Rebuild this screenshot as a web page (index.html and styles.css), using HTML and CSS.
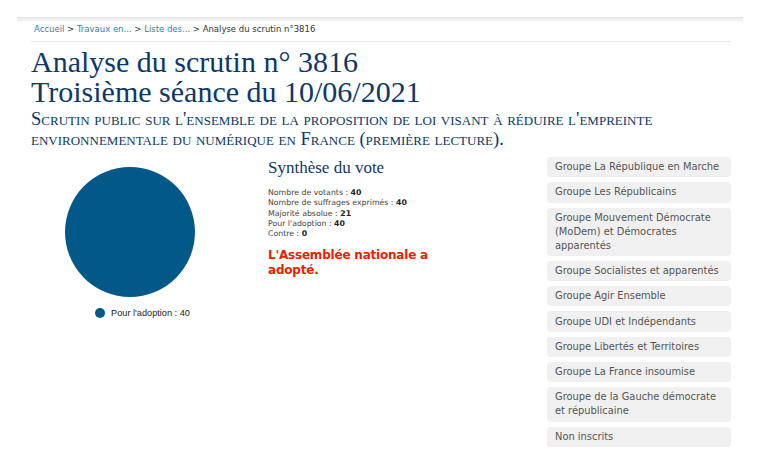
FILE: index.html
```html
<!DOCTYPE html>
<html lang="fr">
<head>
  <meta charset="UTF-8" />
  <title>Analyse du scrutin n° 3816</title>
  <link rel="stylesheet" href="styles.css">
</head>
<body>
  <div class="topbar"></div>
  <div class="page">
    <div class="breadcrumb">
      <a href="#">Accueil</a> &gt; <a href="#">Travaux en...</a> &gt; <a href="#">Liste des...</a> &gt; Analyse du scrutin n°3816
    </div>

    <h1>Analyse du scrutin n° 3816<br>Troisième séance du 10/06/2021</h1>
    <p class="subtitle">Scrutin public sur l'ensemble de la proposition de loi visant à réduire l'empreinte environnementale du numérique en France (première lecture).</p>

    <div class="row">
      <!-- camembert -->
      <div class="chart">
        <svg width="130" height="130" viewBox="0 0 130 130">
          <circle cx="65" cy="65" r="65" fill="#03588a" />
        </svg>
        <div class="legend"><span class="dot"></span>Pour l'adoption : 40</div>
      </div>

      <div class="summary">
        <h2>Synthèse du vote</h2>
        <ul class="stats">
          <li>Nombre de votants : <b>40</b></li>
          <li>Nombre de suffrages exprimés : <b>40</b></li>
          <li>Majorité absolue : <b>21</b></li>
          <li>Pour l'adoption : <b>40</b></li>
          <li>Contre : <b>0</b></li>
        </ul>
        <p class="result">L'Assemblée nationale a adopté.</p>
      </div>

      <ul class="groups">
        <li>Groupe La République en Marche</li>
        <li>Groupe Les Républicains</li>
        <li>Groupe Mouvement Démocrate (MoDem) et Démocrates apparentés</li>
        <li>Groupe Socialistes et apparentés</li>
        <li>Groupe Agir Ensemble</li>
        <li>Groupe UDI et Indépendants</li>
        <li>Groupe Libertés et Territoires</li>
        <li>Groupe La France insoumise</li>
        <li>Groupe de la Gauche démocrate et républicaine</li>
        <li>Non inscrits</li>
      </ul>
    </div>
  </div>
</body>
</html>
```

FILE: styles.css
```css
body {
  margin: 0;
  background: #fff;
  font-family: "DejaVu Sans", Verdana, sans-serif;
  color: #333;
}
.topbar {
  margin: 17px 16px 0 17px;
  height: 6px;
  background: linear-gradient(#e3e3e3, #fff);
}
.page {
  margin: 0 28px 0 31px;
}
.breadcrumb {
  font-size: 8.5px;
  line-height: 12px;
  padding: 0 0 6px 3px;
  color: #333;
  border-bottom: 1px solid #e8e8e8;
}
.breadcrumb a {
  color: #1a87c6;
  text-decoration: none;
}
h1 {
  font-family: "Liberation Serif", "Times New Roman", serif;
  font-weight: normal;
  font-size: 30px;
  line-height: 30px;
  color: #0d3868;
  margin: 5px 0 0;
}
.subtitle {
  font-family: "Liberation Serif", "Times New Roman", serif;
  font-variant: small-caps;
  font-size: 18.5px;
  line-height: 20px;
  color: #0d3868;
  margin: 2px 0 0;
}
.row {
  display: flex;
  margin-top: 8px;
}
.chart {
  width: 197px;
  margin-right: 40px;
  display: flex;
  flex-direction: column;
  align-items: center;
  padding-top: 10px;
}
.legend {
  font-family: "Liberation Sans", Arial, sans-serif;
  font-size: 9.2px;
  color: #222;
  margin: 11px 0 0 26px;
  display: flex;
  align-items: center;
}
.dot {
  width: 10px;
  height: 10px;
  border-radius: 50%;
  background: #03588a;
  margin-right: 6px;
}
.summary {
  width: 279px;
}
.summary h2 {
  font-family: "Liberation Serif", "Times New Roman", serif;
  font-weight: normal;
  font-size: 17px;
  line-height: 20px;
  color: #0d3868;
  margin: 1px 0 10px;
}
.stats {
  list-style: none;
  margin: 0;
  padding: 0;
  font-size: 7.8px;
  line-height: 10.3px;
  color: #444;
}
.stats b {
  color: #222;
}
.result {
  color: #f01c00;
  font-weight: bold;
  font-size: 12px;
  letter-spacing: -0.2px;
  line-height: 15px;
  width: 180px;
  margin: 9px 0 0;
}
.groups {
  list-style: none;
  margin: 0;
  padding: 0;
  width: 184px;
  display: flex;
  flex-direction: column;
  gap: 5px;
}
.groups li {
  background: #f0f0f0;
  border-radius: 4px;
  padding: 3.15px 8px;
  font-size: 9.9px;
  line-height: 14px;
  color: #555;
}
```
